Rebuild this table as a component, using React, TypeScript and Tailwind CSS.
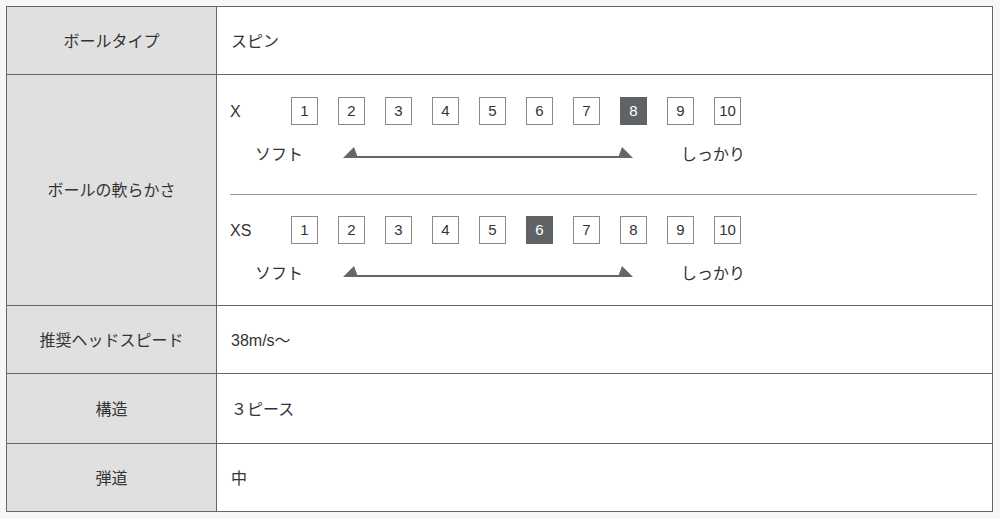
const font = { fontFamily: '"Liberation Sans", "Noto Sans CJK JP", sans-serif' };

const Scale: React.FC<{ label: string; active: number }> = ({ label, active }) => {
  const nums = [1, 2, 3, 4, 5, 6, 7, 8, 9, 10];
  return (
    <div className="h-[70px]">
      <div className="flex items-center">
        <span className="w-[61px] text-[16px] pt-[1px]">{label}</span>
        <div className="flex gap-[20px]">
          {nums.map((n) => (
            <div
              key={n}
              className={
                n === active
                  ? "w-[27px] h-[28px] flex items-center justify-center text-[15px] pt-[1px] bg-[#606366] border border-[#606366] text-white"
                  : "w-[27px] h-[28px] flex items-center justify-center text-[15px] pt-[1px] bg-white border border-[#8a8a8a]"
              }
            >
              {n}
            </div>
          ))}
        </div>
      </div>
      <div className="flex items-center h-[24px] mt-[16px]">
        <span className="ml-[25px] w-[88px] text-[16px] pt-[3px]">ソフト</span>
        <svg width="290" height="12" viewBox="0 0 290 12" className="mb-[1px]">
          <line x1="10" y1="10" x2="280" y2="10" stroke="#666" strokeWidth="2" />
          <polygon points="0,11 11,0 15,11" fill="#666" />
          <polygon points="275,11 279,0 290,11" fill="#666" />
        </svg>
        <span className="ml-[48px] text-[16px] pt-[3px]">しっかり</span>
      </div>
    </div>
  );
};

const Label: React.FC<{ children: React.ReactNode }> = ({ children }) => (
  <div className="w-[210px] shrink-0 bg-[#e0e0e0] border-r border-[#666] flex items-center justify-center text-[16px] pt-[2px]">
    {children}
  </div>
);

export default function App() {
  return (
    <div className="min-h-screen bg-[#f7f7f7] p-[6px] text-[#333]" style={font}>
      <div className="w-[987px] border border-[#666] bg-white">
        {/* ボールタイプ */}
        <div className="flex h-[68px] border-b border-[#666]">
          <Label>ボールタイプ</Label>
          <div className="flex-1 flex items-center pl-[14px] pt-[2px] text-[16px]">スピン</div>
        </div>

        {/* ボールの軟らかさ */}
        <div className="flex h-[231px] border-b border-[#666]">
          <Label>ボールの軟らかさ</Label>
          <div className="flex-1 pt-[22px] pl-[13px] pr-[15px]">
            <Scale label="X" active={8} />
            <div className="h-px bg-[#999] mt-[27px] mb-[21px]" />
            <Scale label="XS" active={6} />
          </div>
        </div>

        <div className="flex h-[68px] border-b border-[#666]">
          <Label>推奨ヘッドスピード</Label>
          <div className="flex-1 flex items-center pl-[14px] pt-[2px] text-[16px]">38m/s～</div>
        </div>

        <div className="flex h-[70px] border-b border-[#666]">
          <Label>構造</Label>
          <div className="flex-1 flex items-center pl-[14px] pt-[2px] text-[16px]">３ピース</div>
        </div>

        <div className="flex h-[67px]">
          <Label>弾道</Label>
          <div className="flex-1 flex items-center pl-[14px] pt-[2px] text-[16px]">中</div>
        </div>
      </div>
    </div>
  );
}
